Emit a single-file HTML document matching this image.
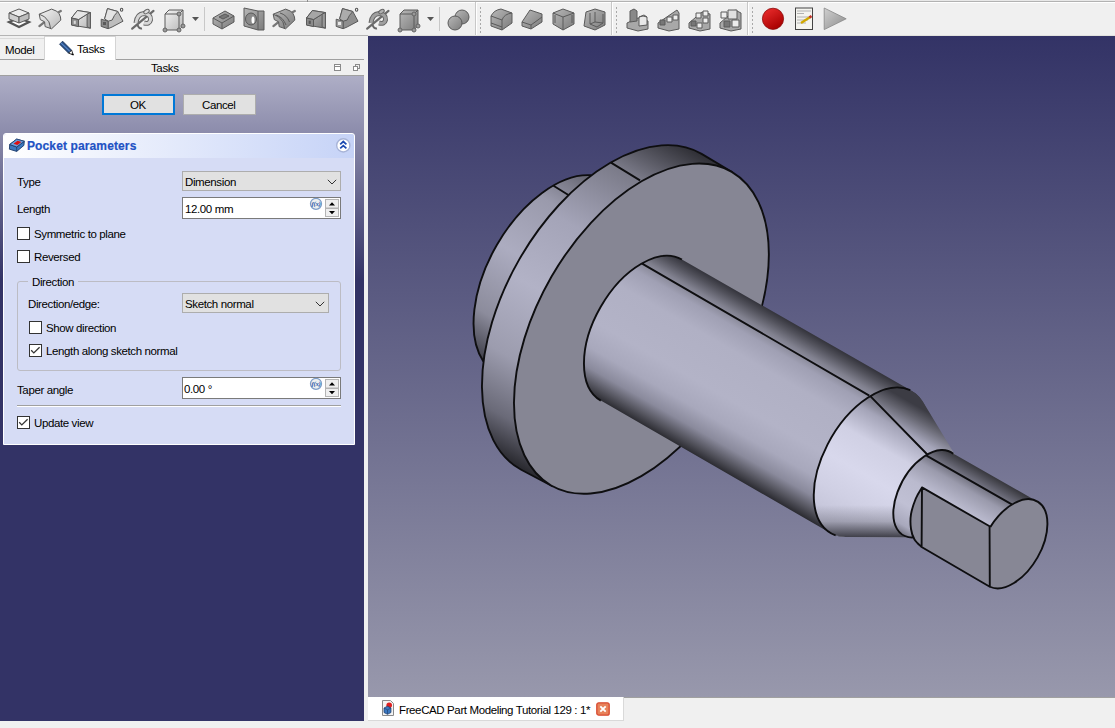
<!DOCTYPE html>
<html><head><meta charset="utf-8">
<style>
*{margin:0;padding:0;box-sizing:border-box}
html,body{width:1115px;height:728px;overflow:hidden;background:#f0f0f0;font-family:"Liberation Sans",sans-serif;font-size:11px;color:#000}
.a{position:absolute}
.t{position:absolute;white-space:nowrap;font-size:11.5px;line-height:13px;letter-spacing:-0.38px;color:#000;margin-top:0.6px}
.cb{position:absolute;width:13px;height:13px;border:1px solid #333;background:#fff}
.combo{position:absolute;background:#e1e1e1;border:1px solid #adadad}
.spin{position:absolute;background:#fff;border:1px solid #7a7a7a}
</style></head><body>
<!-- toolbar -->
<div class="a" style="left:0;top:0;width:1115px;height:1px;background:#e8e8e8"></div>
<div class="a" style="left:0;top:1px;width:1115px;height:1px;background:#b2b2b2"></div>
<div class="a" style="left:307px;top:0;width:1px;height:2px;background:#8c8c8c"></div>
<div class="a" style="left:0;top:2px;width:1115px;height:1px;background:#fff"></div>
<div class="a" style="left:0;top:35px;width:368px;height:1px;background:#b4b4b4"></div>
<div class="a" style="left:368px;top:35px;width:747px;height:1px;background:#e2e2de"></div>
<div id="tb" class="a" style="left:0;top:0;width:1115px;height:36px"><svg class="a" style="left:0;top:0" width="1115" height="36"><defs>
<linearGradient id="ig1" x1="0" y1="0" x2="1" y2="1"><stop offset="0" stop-color="#f4f4f4"/><stop offset="1" stop-color="#b8b8b8"/></linearGradient>
<linearGradient id="ig2" x1="0" y1="0" x2="1" y2="1"><stop offset="0" stop-color="#b8b8b8"/><stop offset="1" stop-color="#7c7c7c"/></linearGradient>
<linearGradient id="ired" x1="0" y1="0" x2="0.6" y2="1"><stop offset="0" stop-color="#f03030"/><stop offset="1" stop-color="#a80000"/></linearGradient>
<linearGradient id="iplay" x1="0" y1="0" x2="1" y2="1"><stop offset="0" stop-color="#d0d0d0"/><stop offset="1" stop-color="#8c8c8c"/></linearGradient>
</defs><g transform="translate(8,8)"><path d="M1 14 L11 10 L21 14 L11 19 Z" fill="#fff" stroke="#555" stroke-width="2.2"/>
<path d="M1 5 L11 1 L21 5 L11 9 Z" fill="#ececec" stroke="#5a5a5a" stroke-width="1" stroke-linejoin="round"/><path d="M1 5 L11 9 L11 15 L1 11 Z" fill="#cfcfcf" stroke="#5a5a5a" stroke-width="1" stroke-linejoin="round"/><path d="M11 9 L21 5 L21 11 L11 15 Z" fill="#bdbdbd" stroke="#5a5a5a" stroke-width="1" stroke-linejoin="round"/></g><g transform="translate(39,8)"><path d="M0.4 18.1 L5.1 14.3 M19 4.6 L21.8 3" stroke="#777" stroke-width="2.3" stroke-linecap="round"/><path d="M0.2 6.2 L12.6 1.1 Q19 3 20.1 5.7 Q22 9 21.8 12.1 L12.6 20.8 L6.1 18.6 L5.6 13.8 L1.3 11.6 Z" fill="url(#ig1)" stroke="#5a5a5a" stroke-width="1" stroke-linejoin="round"/><path d="M0.2 6.2 Q6 7.5 9.9 13.8 Q11 17 11.5 20.8" fill="none" stroke="#5a5a5a" stroke-width="1" stroke-linejoin="round"/></g><g transform="translate(71,10)"><path d="M6.4 0.5 L19.4 2.6 L19.4 18.2 L0.5 15 L0.5 8 Z" fill="url(#ig1)" stroke="#5a5a5a" stroke-width="1" stroke-linejoin="round"/><path d="M0.5 8 L7.5 9.6 L16.1 4.2 M7.5 9.6 L7.5 16.6" fill="none" stroke="#5a5a5a" stroke-width="1" stroke-linejoin="round"/><path d="M6.4 0.5 L19.4 2.6 L16.1 4.2 L7.5 9.6 L0.5 8 Z" fill="#e6e6e6" stroke="#5a5a5a" stroke-width="1" stroke-linejoin="round"/><path d="M0.5 8 L7.5 9.6 L7.5 16.6 L0.5 15 Z" fill="#8a8a8a" stroke="#5a5a5a" stroke-width="1" stroke-linejoin="round"/><rect x="2.7" y="10.7" width="2.1" height="3.2" fill="#d8d8d8"/><path d="M16.1 4.2 L19.4 2.6 L19.4 18.2 L16.1 16.8 Z" fill="#9a9a9a" stroke="#5a5a5a" stroke-width="1" stroke-linejoin="round"/></g><g transform="translate(100,8)"><path d="M7.5 0.6 L17.8 3.5 L23 13.2 L12.1 19 L8.1 20.7 L8.1 13.2 L4.6 10.9 Z" fill="#bdbdbd" stroke="#5a5a5a" stroke-width="1" stroke-linejoin="round"/><path d="M7.5 0.6 L17.8 3.5 Q14 7 12.1 12.1 L8.1 13.2 L4.6 10.9 Q6 6 7.5 0.6 Z" fill="#e4e4e4" stroke="#5a5a5a" stroke-width="1" stroke-linejoin="round"/><path d="M1.2 11.2 L8.1 13.2 L8.1 20.7 L1.2 18.4 Z" fill="#8c8c8c" stroke="#5a5a5a" stroke-width="1" stroke-linejoin="round"/><rect x="3" y="14" width="3" height="3" fill="#5a5a5a"/><ellipse cx="21.6" cy="1.8" rx="1.2" ry="1.5" fill="none" stroke="#555" stroke-width="1.1"/></g><g transform="translate(131,8)"><path d="M1.2 20.7 L22.5 2.9" stroke="#6a6a6a" stroke-width="2.2" stroke-linecap="round"/><path d="M5 15 Q6 6 13 5.5 Q20 6 19.5 12 Q18.5 16.5 13 15" fill="none" stroke="#666" stroke-width="5"/><path d="M5 15 Q6 6 13 5.5 Q20 6 19.5 12 Q18.5 16.5 13 15" fill="none" stroke="#d6d6d6" stroke-width="3"/><ellipse cx="15.5" cy="3.6" rx="3" ry="1.8" transform="rotate(-30 15.5 3.6)" fill="#dedede" stroke="#666" stroke-width="1"/><path d="M6.5 17 Q8 21 11 20.5" fill="none" stroke="#666" stroke-width="2"/></g><g transform="translate(163,9)"><path d="M2 5 L6 1 L20 1 L20 17 L16 21 L2 21 Z" fill="url(#ig1)" stroke="#5a5a5a" stroke-width="1" stroke-linejoin="round"/><path d="M2 5 L16 5 L20 1 M16 5 L16 21" fill="none" stroke="#5a5a5a" stroke-width="1" stroke-linejoin="round"/><circle cx="16" cy="5" r="2" fill="#999" stroke="#666"/><circle cx="2" cy="21" r="2" fill="#999" stroke="#666"/><circle cx="16" cy="21" r="2" fill="#999" stroke="#666"/><circle cx="20" cy="17" r="2" fill="#999" stroke="#666"/></g><path d="M192 17 L199 17 L195.5 21 Z" fill="#555"/><rect x="204" y="7" width="1" height="24" fill="#c8c8c8"/><g transform="translate(212,10)"><path d="M1 8 L13 1 L22 6 L22 12 L10 19 L1 14 Z" fill="url(#ig2)" stroke="#5a5a5a" stroke-width="1" stroke-linejoin="round"/><path d="M1 8 L10 13 L22 6 M10 13 L10 19" fill="none" stroke="#5a5a5a" stroke-width="1" stroke-linejoin="round"/><path d="M7 7 L13 4 L17 6 L11 9 Z" fill="#777" stroke="#5a5a5a" stroke-width="1" stroke-linejoin="round"/></g><g transform="translate(243,7)"><path d="M1 1 L15 4 L21 4 L21 23 L15 23 L1 19 Z" fill="url(#ig2)" stroke="#5a5a5a" stroke-width="1" stroke-linejoin="round"/><path d="M15 4 L15 23" stroke="#5a5a5a" stroke-width="1" stroke-linejoin="round"/><ellipse cx="8" cy="12" rx="5.5" ry="6" fill="#8a8a8a" stroke="#5a5a5a" stroke-width="1" stroke-linejoin="round"/><ellipse cx="10" cy="13" rx="1.5" ry="3.5" fill="#fff"/></g><g transform="translate(273,8)"><path d="M0.4 18.1 L5.1 14.3 M19 4.6 L21.8 3" stroke="#777" stroke-width="2.3" stroke-linecap="round"/><path d="M0.2 6.2 L12.6 1.1 Q19 3 20.1 5.7 Q22 9 21.8 12.1 L12.6 20.8 L6.1 18.6 L5.6 13.8 L1.3 11.6 Z" fill="url(#ig2)" stroke="#5a5a5a" stroke-width="1" stroke-linejoin="round"/><path d="M0.2 6.2 Q6 7.5 9.9 13.8 Q11 17 11.5 20.8" fill="none" stroke="#5a5a5a" stroke-width="1" stroke-linejoin="round"/><path d="M3 7 Q10 9 13 17 M7 5 Q14 7 16.5 14" fill="none" stroke="#5a5a5a" stroke-width="1" stroke-linejoin="round"/></g><g transform="translate(306,10)"><path d="M6.4 0.5 L19.4 2.6 L19.4 18.2 L0.5 15 L0.5 8 Z" fill="url(#ig2)" stroke="#5a5a5a" stroke-width="1" stroke-linejoin="round"/><path d="M0.5 8 L7.5 9.6 L16.1 4.2 M7.5 9.6 L7.5 16.6" fill="none" stroke="#5a5a5a" stroke-width="1" stroke-linejoin="round"/><path d="M6.4 0.5 L19.4 2.6 L16.1 4.2 L7.5 9.6 L0.5 8 Z" fill="#a6a6a6" stroke="#5a5a5a" stroke-width="1" stroke-linejoin="round"/><path d="M0.5 8 L7.5 9.6 L7.5 16.6 L0.5 15 Z" fill="#8a8a8a" stroke="#5a5a5a" stroke-width="1" stroke-linejoin="round"/><rect x="2.7" y="10.7" width="2.1" height="3.2" fill="#555"/><path d="M16.1 4.2 L19.4 2.6 L19.4 18.2 L16.1 16.8 Z" fill="#9a9a9a" stroke="#5a5a5a" stroke-width="1" stroke-linejoin="round"/></g><g transform="translate(335,8)"><path d="M7.5 0.6 L17.8 3.5 L23 13.2 L12.1 19 L8.1 20.7 L8.1 13.2 L4.6 10.9 Z" fill="#8e8e8e" stroke="#5a5a5a" stroke-width="1" stroke-linejoin="round"/><path d="M7.5 0.6 L17.8 3.5 Q14 7 12.1 12.1 L8.1 13.2 L4.6 10.9 Q6 6 7.5 0.6 Z" fill="#acacac" stroke="#5a5a5a" stroke-width="1" stroke-linejoin="round"/><path d="M1.2 11.2 L8.1 13.2 L8.1 20.7 L1.2 18.4 Z" fill="#9a9a9a" stroke="#5a5a5a" stroke-width="1" stroke-linejoin="round"/><rect x="3" y="14" width="3" height="3" fill="#e8e8e8"/><ellipse cx="21.6" cy="1.8" rx="1.2" ry="1.5" fill="none" stroke="#555" stroke-width="1.1"/></g><g transform="translate(366,8)"><path d="M1.2 20.7 L22.5 2.9" stroke="#6a6a6a" stroke-width="2.2" stroke-linecap="round"/><path d="M5 15 Q6 6 13 5.5 Q20 6 19.5 12 Q18.5 16.5 13 15" fill="none" stroke="#666" stroke-width="5"/><path d="M5 15 Q6 6 13 5.5 Q20 6 19.5 12 Q18.5 16.5 13 15" fill="none" stroke="#a0a0a0" stroke-width="3"/><ellipse cx="15.5" cy="3.6" rx="3" ry="1.8" transform="rotate(-30 15.5 3.6)" fill="#b0b0b0" stroke="#666" stroke-width="1"/><path d="M6.5 17 Q8 21 11 20.5" fill="none" stroke="#666" stroke-width="2"/></g><g transform="translate(398,9)"><path d="M2 5 L6 1 L20 1 L20 17 L16 21 L2 21 Z" fill="url(#ig2)" stroke="#5a5a5a" stroke-width="1" stroke-linejoin="round"/><path d="M2 5 L16 5 L20 1 M16 5 L16 21" fill="none" stroke="#5a5a5a" stroke-width="1" stroke-linejoin="round"/><circle cx="16" cy="5" r="2" fill="#999" stroke="#666"/><circle cx="2" cy="21" r="2" fill="#999" stroke="#666"/><circle cx="16" cy="21" r="2" fill="#999" stroke="#666"/><circle cx="20" cy="17" r="2" fill="#999" stroke="#666"/></g><path d="M427 17 L434 17 L430.5 21 Z" fill="#555"/><rect x="439" y="7" width="1" height="24" fill="#c8c8c8"/><g transform="translate(447,9)"><circle cx="15" cy="8" r="7" fill="url(#ig2)" stroke="#5a5a5a" stroke-width="1" stroke-linejoin="round"/><circle cx="8" cy="14" r="7" fill="url(#ig2)" stroke="#5a5a5a" stroke-width="1" stroke-linejoin="round"/></g><rect x="475" y="2" width="1" height="33" fill="#c8c8c8"/><rect x="476" y="2" width="1" height="33" fill="#fff"/><rect x="480" y="7" width="1" height="2" fill="#a8a8a8"/><rect x="480" y="11" width="1" height="2" fill="#a8a8a8"/><rect x="480" y="15" width="1" height="2" fill="#a8a8a8"/><rect x="480" y="19" width="1" height="2" fill="#a8a8a8"/><rect x="480" y="23" width="1" height="2" fill="#a8a8a8"/><rect x="480" y="27" width="1" height="2" fill="#a8a8a8"/><rect x="480" y="31" width="1" height="2" fill="#a8a8a8"/><g transform="translate(490,8)"><path d="M1 8 Q4 2 11 1 L22 5 L22 15 L12 22 L1 18 Z" fill="url(#ig2)" stroke="#5a5a5a" stroke-width="1" stroke-linejoin="round"/><path d="M1 8 L12 12 Q14 6 22 5 M12 12 L12 22" fill="none" stroke="#5a5a5a" stroke-width="1" stroke-linejoin="round"/><path d="M1 15 L12 19" stroke="#5a5a5a" stroke-width="1" stroke-linejoin="round"/></g><g transform="translate(521,8)"><path d="M1 14 L9 2 L21 6 L21 14 L10 21 L1 18 Z" fill="url(#ig2)" stroke="#5a5a5a" stroke-width="1" stroke-linejoin="round"/><path d="M1 14 L10 17 L21 9 M10 17 L10 21" fill="none" stroke="#5a5a5a" stroke-width="1" stroke-linejoin="round"/></g><g transform="translate(552,8)"><path d="M1 5 L11 1 L22 5 L22 16 L11 22 L1 16 Z" fill="url(#ig2)" stroke="#5a5a5a" stroke-width="1" stroke-linejoin="round"/><path d="M1 5 L11 9 L22 5 M11 9 L11 22 M3 7 L3 15 M20 7 L20 15" fill="none" stroke="#5a5a5a" stroke-width="1" stroke-linejoin="round"/></g><g transform="translate(583,8)"><path d="M3 4 L12 1 L22 4 L22 17 L12 22 L1 18 Z" fill="url(#ig2)" stroke="#5a5a5a" stroke-width="1" stroke-linejoin="round"/><path d="M7 5 L7 16 L14 19 L20 15 L20 6 M7 16 L12 14 L20 15 M12 14 L12 4" fill="none" stroke="#5a5a5a" stroke-width="1" stroke-linejoin="round"/></g><rect x="611" y="2" width="1" height="33" fill="#c8c8c8"/><rect x="612" y="2" width="1" height="33" fill="#fff"/><rect x="616" y="7" width="1" height="2" fill="#a8a8a8"/><rect x="616" y="11" width="1" height="2" fill="#a8a8a8"/><rect x="616" y="15" width="1" height="2" fill="#a8a8a8"/><rect x="616" y="19" width="1" height="2" fill="#a8a8a8"/><rect x="616" y="23" width="1" height="2" fill="#a8a8a8"/><rect x="616" y="27" width="1" height="2" fill="#a8a8a8"/><rect x="616" y="31" width="1" height="2" fill="#a8a8a8"/><g transform="translate(626,8)"><path d="M1 15 L12 10 L22 13 L22 21 L12 23 L1 20 Z" fill="#a8a8a8" stroke="#5a5a5a" stroke-width="1" stroke-linejoin="round"/><path d="M4 3 L8 1 L11 3 L11 13 L4 14 Z" fill="#888" stroke="#5a5a5a" stroke-width="1" stroke-linejoin="round"/><path d="M13 9 L18 7 L21 9 L21 17 L13 18 Z" fill="#e8e8e8" stroke="#5a5a5a" stroke-width="1" stroke-linejoin="round"/><path d="M13 9 Q17 7 21 9" fill="none" stroke="#5a5a5a" stroke-width="1" stroke-linejoin="round"/></g><g transform="translate(657,8)"><path d="M1 15 L20 2 L22 5 L22 21 L12 23 L1 20 Z" fill="#a8a8a8" stroke="#5a5a5a" stroke-width="1" stroke-linejoin="round"/><rect x="3" y="12" width="5" height="5" fill="#777" stroke="#5a5a5a" stroke-width="1" stroke-linejoin="round"/><rect x="10" y="9" width="5" height="5" fill="#eee" stroke="#5a5a5a" stroke-width="1" stroke-linejoin="round"/><rect x="16" y="7" width="5" height="5" fill="#eee" stroke="#5a5a5a" stroke-width="1" stroke-linejoin="round"/></g><g transform="translate(688,8)"><path d="M1 15 L14 4 L22 6 L22 21 L12 23 L1 20 Z" fill="#a8a8a8" stroke="#5a5a5a" stroke-width="1" stroke-linejoin="round"/><rect x="3" y="13" width="5" height="5" fill="#777" stroke="#5a5a5a" stroke-width="1" stroke-linejoin="round"/><rect x="9" y="15" width="5" height="5" fill="#eee" stroke="#5a5a5a" stroke-width="1" stroke-linejoin="round"/><rect x="8" y="5" width="5" height="5" fill="#eee" stroke="#5a5a5a" stroke-width="1" stroke-linejoin="round"/><rect x="15" y="3" width="5" height="5" fill="#eee" stroke="#5a5a5a" stroke-width="1" stroke-linejoin="round"/><rect x="15" y="10" width="5" height="5" fill="#eee" stroke="#5a5a5a" stroke-width="1" stroke-linejoin="round"/></g><g transform="translate(719,8)"><path d="M1 15 L16 2 L22 5 L22 21 L12 23 L1 20 Z" fill="#a8a8a8" stroke="#5a5a5a" stroke-width="1" stroke-linejoin="round"/><rect x="2" y="4" width="6" height="6" fill="#eee" stroke="#5a5a5a" stroke-width="1" stroke-linejoin="round"/><rect x="9" y="2" width="9" height="9" fill="#e0e0e0" stroke="#5a5a5a" stroke-width="1" stroke-linejoin="round"/><rect x="5" y="13" width="6" height="6" fill="#777" stroke="#5a5a5a" stroke-width="1" stroke-linejoin="round"/><rect x="13" y="12" width="7" height="7" fill="#eee" stroke="#5a5a5a" stroke-width="1" stroke-linejoin="round"/></g><rect x="747" y="2" width="1" height="33" fill="#c8c8c8"/><rect x="748" y="2" width="1" height="33" fill="#fff"/><rect x="752" y="7" width="1" height="2" fill="#a8a8a8"/><rect x="752" y="11" width="1" height="2" fill="#a8a8a8"/><rect x="752" y="15" width="1" height="2" fill="#a8a8a8"/><rect x="752" y="19" width="1" height="2" fill="#a8a8a8"/><rect x="752" y="23" width="1" height="2" fill="#a8a8a8"/><rect x="752" y="27" width="1" height="2" fill="#a8a8a8"/><rect x="752" y="31" width="1" height="2" fill="#a8a8a8"/><circle cx="773" cy="18.8" r="10.6" fill="url(#ired)" stroke="#8a0c0c" stroke-width="0.8"/><rect x="795.5" y="8" width="17" height="21.5" fill="#f4f4f0" stroke="#444" stroke-width="1"/><path d="M797 11 L811 11 M797 13.5 L804 13.5 M797 17 L811 17 M797 20 L808 20 M797 23 L806 23" stroke="#aaa" stroke-width="0.9"/><path d="M801 23 L811 16.5" stroke="#d0a800" stroke-width="2.4"/><path d="M809.5 17.5 L811.5 16" stroke="#c03030" stroke-width="2.4"/><path d="M824.2 8 L846.2 18.8 L824.2 29.6 Z" fill="url(#iplay)" stroke="#888" stroke-width="0.8"/></svg></div>

<!-- left panel -->
<div class="a" style="left:0;top:59px;width:364px;height:1px;background:#a0a0a0"></div>
<div class="a" style="left:0px;top:38px;width:45px;height:22px;border-top:1px solid #dadada;border-right:1px solid #dadada"></div>
<div class="a" style="left:44px;top:36px;width:72px;height:24px;background:#fff;border:1px solid #d4d4d4;border-bottom:none"></div>
<div class="t" style="left:5px;top:43px">Model</div>
<div class="t" style="left:77px;top:42px">Tasks</div>
<svg class="a" style="left:57px;top:39px" width="19" height="18"><path d="M2.6 5.2 L5.6 2.2 L14.6 11.2 L11.6 14.2 Z" fill="#284f86" stroke="#1a3358" stroke-width="0.9" stroke-linejoin="round"/><path d="M4 3.8 L13.2 12.7" stroke="#5a8acb" stroke-width="1.1"/><path d="M11.6 14.2 L14.6 11.2 L16.3 15.9 Z" fill="#fff" stroke="#222" stroke-width="0.9" stroke-linejoin="round"/><path d="M15.2 14.6 L16.3 15.9 L14.9 15.4Z" fill="#000" stroke="#000" stroke-width="0.8"/></svg>
<div class="t" style="left:151px;top:61px">Tasks</div>
<svg class="a" style="left:330px;top:60px" width="34" height="15"><rect x="4.5" y="4.5" width="6" height="6" fill="#fff" stroke="#8a8a8a"/><path d="M4.5 6.5 L10.5 6.5" stroke="#8a8a8a"/><rect x="25.5" y="4.5" width="4" height="4" fill="none" stroke="#8a8a8a"/><rect x="23.5" y="6.5" width="4" height="4" fill="#fff" stroke="#8a8a8a"/></svg>
<div class="a" style="left:0;top:75px;width:364px;height:1px;background:#a0a0a0"></div>
<div class="a" style="left:0;top:76px;width:364px;height:645px;background:linear-gradient(#aeaec6 0px,#333366 204px,#333366 100%)"></div>
<div class="a" style="left:364px;top:36px;width:4px;height:685px;background:#f0f0f0"></div>

<!-- OK / Cancel -->
<div class="a" style="left:102px;top:94px;width:73px;height:21px;background:#e1e1e1;border:2px solid #0078d7"></div>
<div class="t" style="left:130px;top:98.6px">OK</div>
<div class="a" style="left:183px;top:94px;width:73px;height:21px;background:#e1e1e1;border:1px solid #adadad"></div>
<div class="t" style="left:202px;top:98.6px">Cancel</div>

<!-- dialog -->
<div class="a" style="left:3px;top:133px;width:352px;height:312px;background:#d6dcf5;border:1px solid #fff;border-radius:3px 3px 0 0"></div>
<div class="a" style="left:4px;top:134px;width:350px;height:24px;background:linear-gradient(90deg,#fff,#c6d3f7);border-radius:3px 3px 0 0"></div>
<svg class="a" style="left:8px;top:137px" width="18" height="16"><path d="M1.7 7.5 L8.7 2.1 L16.3 4.3 L15.9 8.4 L8.7 14.4 L1.4 12.2 Z" fill="#3d78c0" stroke="#1d3a68" stroke-width="0.9" stroke-linejoin="round"/><path d="M1.7 7.5 L8.7 10 L16.3 4.3 M8.7 10 L8.7 14.4" fill="none" stroke="#1d3a68" stroke-width="0.8"/><path d="M1.7 7.5 L8.7 2.1 L16.3 4.3 L8.7 10 Z" fill="#6aa0e0" stroke="#1d3a68" stroke-width="0.8"/><path d="M5.5 6.8 L9.6 3.8 L13.4 5 L9.3 8 Z" fill="#e01010"/></svg>
<svg class="a" style="left:335px;top:137px" width="17" height="17"><circle cx="8.3" cy="8.4" r="6.6" fill="#fff" stroke="#a8b4d8" stroke-width="1.4"/><path d="M5.2 7.3 L8.3 4.5 L11.4 7.3 M5.2 11.4 L8.3 8.6 L11.4 11.4" fill="none" stroke="#1a48b0" stroke-width="1.7"/></svg>
<div class="t" style="left:27px;top:138.6px;font-weight:bold;font-size:12px;line-height:14px;color:#1f52c4;letter-spacing:0.12px;-webkit-text-stroke:0.2px #1f52c4">Pocket parameters</div>

<div class="t" style="left:17px;top:175.6px">Type</div>
<div class="combo" style="left:182px;top:171px;width:159px;height:20px"></div>
<div class="t" style="left:185px;top:175px">Dimension</div>
<svg class="a" style="left:327px;top:178.5px" width="11" height="7"><path d="M0.8 0.8L5 5L9.2 0.8" fill="none" stroke="#333" stroke-width="1"/></svg>

<div class="t" style="left:17px;top:202px">Length</div>
<div class="spin" style="left:182px;top:197px;width:159px;height:22px"></div>
<div class="t" style="left:185px;top:202.2px">12.00 mm</div>
<svg class="a" style="left:308px;top:197px" width="33" height="22"><circle cx="8" cy="6.8" r="5.5" fill="#eef0f0" stroke="#7c9cc8" stroke-width="1.3"/><text x="8" y="9.2" font-family="Liberation Serif" font-style="italic" font-weight="bold" font-size="6.8" fill="#2a58a8" text-anchor="middle" letter-spacing="-0.3">f(x)</text><rect x="17.5" y="2.5" width="13" height="8.5" fill="#efefef" stroke="#b4b4b4"/><rect x="17.5" y="11.5" width="13" height="8" fill="#efefef" stroke="#b4b4b4"/><path d="M21 8.5 L27 8.5 L24 5.2 Z M21 14 L27 14 L24 17.3 Z" fill="#000"/></svg>

<div class="cb" style="left:17px;top:227px"></div>
<div class="t" style="left:34px;top:227.7px">Symmetric to plane</div>
<div class="cb" style="left:17px;top:250px"></div>
<div class="t" style="left:34px;top:250.5px">Reversed</div>

<div class="a" style="left:17px;top:281px;width:324px;height:90px;border:1px solid #bcbcc4;border-radius:3px"></div>
<div class="a" style="left:28px;top:276px;width:50px;height:10px;background:#d6dcf5"></div>
<div class="t" style="left:32px;top:275.2px">Direction</div>
<div class="t" style="left:28px;top:297.7px">Direction/edge:</div>
<div class="combo" style="left:182px;top:293px;width:147px;height:20px"></div>
<div class="t" style="left:185px;top:297.6px">Sketch normal</div>
<svg class="a" style="left:315px;top:300.5px" width="11" height="7"><path d="M0.8 0.8L5 5L9.2 0.8" fill="none" stroke="#333" stroke-width="1"/></svg>
<div class="cb" style="left:29px;top:321px"></div>
<div class="t" style="left:46px;top:321.2px">Show direction</div>
<div class="cb" style="left:29px;top:344px"></div>
<div class="t" style="left:46px;top:344px">Length along sketch normal</div>
<svg class="a" style="left:29px;top:344px" width="13" height="13"><path d="M2.2 6.3 L4.8 8.9 L10.6 3.2" fill="none" stroke="#333" stroke-width="1.3"/></svg>

<div class="t" style="left:17px;top:383px">Taper angle</div>
<div class="spin" style="left:182px;top:377px;width:159px;height:22px"></div>
<div class="t" style="left:184px;top:382.3px">0.00 °</div>
<svg class="a" style="left:308px;top:377px" width="33" height="22"><circle cx="8" cy="6.8" r="5.5" fill="#eef0f0" stroke="#7c9cc8" stroke-width="1.3"/><text x="8" y="9.2" font-family="Liberation Serif" font-style="italic" font-weight="bold" font-size="6.8" fill="#2a58a8" text-anchor="middle" letter-spacing="-0.3">f(x)</text><rect x="17.5" y="2.5" width="13" height="8.5" fill="#efefef" stroke="#b4b4b4"/><rect x="17.5" y="11.5" width="13" height="8" fill="#efefef" stroke="#b4b4b4"/><path d="M21 8.5 L27 8.5 L24 5.2 Z M21 14 L27 14 L24 17.3 Z" fill="#000"/></svg>

<div class="a" style="left:17px;top:405px;width:324px;height:1px;background:#a0a0a0"></div>
<div class="a" style="left:17px;top:406px;width:324px;height:1px;background:#fff"></div>
<div class="cb" style="left:17px;top:416px"></div>
<div class="t" style="left:34px;top:416.5px">Update view</div>
<svg class="a" style="left:17px;top:416px" width="13" height="13"><path d="M2.2 6.3 L4.8 8.9 L10.6 3.2" fill="none" stroke="#333" stroke-width="1.3"/></svg>

<!-- viewport -->
<div class="a" style="left:368px;top:36px;width:747px;height:661px;background:linear-gradient(#333366,#9898ac)"></div>
<div id="model" class="a" style="left:0;top:0;width:1115px;height:728px"><svg width="1115" height="728" style="position:absolute;left:0;top:0"><defs><linearGradient id="gBack" gradientUnits="userSpaceOnUse" x1="480" y1="362" x2="595" y2="172"><stop offset="0" stop-color="#3a3a44"/><stop offset="0.2" stop-color="#8c8c9c"/><stop offset="0.5" stop-color="#acacc0"/><stop offset="0.78" stop-color="#9a9aac"/><stop offset="0.9" stop-color="#7a7a88"/><stop offset="1" stop-color="#5a5a66"/></linearGradient><linearGradient id="gRim" gradientUnits="userSpaceOnUse" x1="538" y1="477" x2="715" y2="158"><stop offset="0" stop-color="#2a2a30"/><stop offset="0.1" stop-color="#6a6a78"/><stop offset="0.25" stop-color="#9c9cae"/><stop offset="0.45" stop-color="#b2b2c6"/><stop offset="0.65" stop-color="#a4a4b8"/><stop offset="0.85" stop-color="#7a7a88"/><stop offset="1" stop-color="#2a2a30"/></linearGradient><linearGradient id="gShaft" gradientUnits="userSpaceOnUse" x1="740.0" y1="292.7" x2="658.9" y2="434.1"><stop offset="0.000" stop-color="#34343c"/><stop offset="0.050" stop-color="#52525c"/><stop offset="0.120" stop-color="#80808e"/><stop offset="0.200" stop-color="#a0a0b4"/><stop offset="0.330" stop-color="#b0b0c4"/><stop offset="0.600" stop-color="#b3b3c7"/><stop offset="0.750" stop-color="#a8a8bc"/><stop offset="0.860" stop-color="#8a8a9c"/><stop offset="0.940" stop-color="#55555f"/><stop offset="1.000" stop-color="#2c2c32"/></linearGradient><linearGradient id="gCone" gradientUnits="userSpaceOnUse" x1="930.0" y1="413.4" x2="859.6" y2="537.1"><stop offset="0.000" stop-color="#3c3c44"/><stop offset="0.080" stop-color="#64646f"/><stop offset="0.200" stop-color="#a4a4b8"/><stop offset="0.380" stop-color="#d0d0e4"/><stop offset="0.600" stop-color="#d8d8ec"/><stop offset="0.800" stop-color="#d0d0e4"/><stop offset="1.000" stop-color="#c4c4d8"/></linearGradient><linearGradient id="gConeB" gradientUnits="userSpaceOnUse" x1="0" y1="505" x2="0" y2="538"><stop offset="0" stop-color="#2a2a32" stop-opacity="0"/><stop offset="0.5" stop-color="#2a2a32" stop-opacity="0.25"/><stop offset="0.85" stop-color="#2a2a32" stop-opacity="0.7"/><stop offset="1" stop-color="#2a2a32" stop-opacity="0.9"/></linearGradient><linearGradient id="gSS" gradientUnits="userSpaceOnUse" x1="960.0" y1="457.4" x2="911.6" y2="541.2"><stop offset="0.000" stop-color="#38383e"/><stop offset="0.100" stop-color="#60606c"/><stop offset="0.250" stop-color="#9a9aac"/><stop offset="0.450" stop-color="#babace"/><stop offset="0.700" stop-color="#c0c0d4"/><stop offset="0.900" stop-color="#a8a8bc"/><stop offset="1.000" stop-color="#70707e"/></linearGradient></defs><path d="M483.39 361.56 A111.93 64.42 -60.07 0 1 591.35 175.23 L591.35 175.23 A181.87 104.67 -60.07 0 0 483.39 361.56 Z" fill="url(#gBack)"/><path d="M483.39 361.56 A111.93 64.42 -60.07 0 1 591.35 175.23 M553.5 185.7 L568.8 195.3" fill="none" stroke="#0e0e10" stroke-width="1.9" stroke-linejoin="round"/><path d="M521.22 469.72 A181.87 104.67 -60.07 1 1 701.61 153.90 L732.46 172.25 L732.46 172.25 A180.99 104.16 -60.07 1 0 552.94 486.53 Z" fill="url(#gRim)"/><path d="M552.94 486.53 L521.22 469.72 L521.22 469.72 A181.87 104.67 -60.07 1 1 701.61 153.90 L732.46 172.25 M611 162.6 L640 180.4" fill="none" stroke="#0e0e10" stroke-width="1.9" stroke-linejoin="round"/><path d="M731.73 171.82 A180.99 104.16 -60.07 0 1 551.10 485.51 A180.99 104.16 -60.07 0 1 731.73 171.82 Z" fill="#868694"/><path d="M731.73 171.82 A180.99 104.16 -60.07 0 1 551.10 485.51 A180.99 104.16 -60.07 0 1 731.73 171.82 Z" fill="none" stroke="#0e0e10" stroke-width="1.9" stroke-linejoin="round"/><path d="M681.91 259.55 A81.36 46.82 -60.07 0 0 600.79 400.61 L830.76 533.17 L830.76 533.17 A81.88 47.12 -60.07 1 0 912.40 391.21 Z" fill="url(#gShaft)"/><path d="M681.91 259.55 A81.36 46.82 -60.07 0 0 600.79 400.61 M641.7 263.4 L869.3 395.6" fill="none" stroke="#0e0e10" stroke-width="1.9" stroke-linejoin="round"/><path d="M922.95 401.74 A81.88 47.12 -60.07 1 0 845.44 536.97 L911.77 537.44 L911.77 537.44 A47.89 27.56 -60.07 0 0 957.10 458.35 Z" fill="url(#gCone)"/><path d="M922.95 401.74 A81.88 47.12 -60.07 1 0 845.44 536.97 L911.77 537.44 L911.77 537.44 A47.89 27.56 -60.07 0 0 957.10 458.35 Z" fill="url(#gConeB)"/><path d="M910.25 390.11 A81.88 47.12 -60.07 1 0 835.58 535.35 M870.3 396.1 L927.3 454.5" fill="none" stroke="#0e0e10" stroke-width="1.9" stroke-linejoin="round"/><path d="M950.92 452.18 A47.89 27.56 -60.07 1 0 922.84 534.94 L989.80 586.80 L989.83 586.74 A48.83 28.10 -60.07 0 0 1037.28 501.44 Z" fill="url(#gSS)"/><path d="M953.28 453.83 A47.89 27.56 -60.07 1 0 922.84 534.94 M926.5 455.6 L1011.8 504.4" fill="none" stroke="#0e0e10" stroke-width="1.9" stroke-linejoin="round"/><path d="M990.36 526.87 A48.83 28.10 -60.07 1 1 989.83 586.74 Z" fill="#878795"/><path d="M922.00 487.40 L989.60 526.30 L989.80 586.80 L921.60 547.00 Z" fill="#878795"/><path d="M922.0 487.4 C921.0 489.2 917.6 494.0 915.8 498.5 C914.0 503.0 911.8 509.1 911.0 514.2 C910.2 519.3 910.4 524.8 911.0 529.0 C911.6 533.2 912.7 536.5 914.5 539.5 C916.3 542.5 920.4 545.8 921.6 547.0 Z" fill="#8a8a98"/><path d="M990.36 526.87 A48.83 28.10 -60.07 1 1 989.83 586.74 M922.00 487.40 L989.60 526.30 L989.80 586.80 L921.60 547.00 Z M922.0 487.4 C921.0 489.2 917.6 494.0 915.8 498.5 C914.0 503.0 911.8 509.1 911.0 514.2 C910.2 519.3 910.4 524.8 911.0 529.0 C911.6 533.2 912.7 536.5 914.5 539.5 C916.3 542.5 920.4 545.8 921.6 547.0" fill="none" stroke="#0e0e10" stroke-width="1.9" stroke-linejoin="round"/></svg></div>

<!-- bottom -->
<div class="a" style="left:368px;top:697px;width:747px;height:1px;background:#a0a0a0"></div>
<div class="a" style="left:368px;top:697px;width:256px;height:24px;background:#fff;border-right:1px solid #d9d9d9;border-bottom:1px solid #d9d9d9"></div>
<div class="t" style="left:399px;top:703.4px">FreeCAD Part Modeling Tutorial 129 : 1*</div>
<svg class="a" style="left:381px;top:699px" width="14" height="18"><path d="M1.5 1.5 L9.5 1.5 L12.5 4.5 L12.5 16.5 L1.5 16.5 Z" fill="#f4f4f4" stroke="#8a8a8a"/><circle cx="8.2" cy="6.2" r="2.8" fill="#e02020"/><path d="M3 9 L6.5 7.2 L10 9 L10 13.5 L6.5 15.3 L3 13.5 Z" fill="#3a78c0" stroke="#1d3a68" stroke-width="0.7"/><path d="M3 9 L6.5 10.8 L10 9 M6.5 10.8 L6.5 15.3" fill="none" stroke="#1d3a68" stroke-width="0.6"/></svg>
<svg class="a" style="left:596px;top:702px" width="14" height="14"><rect x="0.8" y="0.8" width="12.4" height="12.4" rx="2" fill="#e8825a" stroke="#d84a30" stroke-width="1.3"/><path d="M4.3 4.3 L9.7 9.7 M9.7 4.3 L4.3 9.7" stroke="#fff" stroke-width="1.9"/></svg>
</body></html>
